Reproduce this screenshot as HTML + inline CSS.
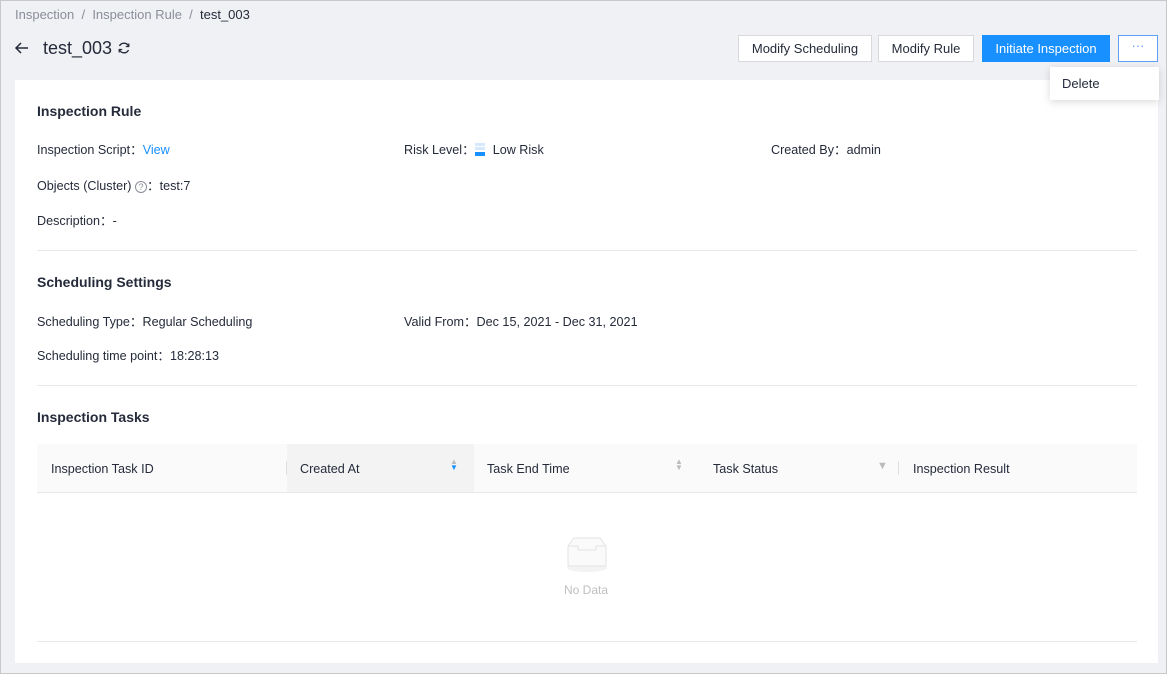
<!DOCTYPE html>
<html><head><meta charset="utf-8"><style>
*{box-sizing:border-box;margin:0;padding:0}
body{width:1167px;height:674px;overflow:hidden;font-family:"Liberation Sans",sans-serif;font-size:13px;color:#252b3a;background:#fff}
.frame{position:absolute;left:0;top:0;width:1167px;height:674px;border:1px solid #c8c8c8;background:#f0f1f5}
.a{position:absolute;white-space:nowrap}
.card{position:absolute;left:14px;top:79px;width:1143px;height:583px;background:#fff}
.btn{position:absolute;top:34px;height:27px;border:1px solid #d9d9d9;background:#fff;font-size:13px;text-align:center;line-height:25px;color:#252b3a}
.h{font-weight:bold;font-size:14px}
.hr{position:absolute;left:22px;width:1100px;height:1px;background:#e8e8e8}
.th{position:absolute;top:365px;height:48px;line-height:48px;font-size:13px;color:#252b3a}
.t{font-size:12.6px}
</style></head><body><div class="frame">
<div class="a" style="left:14px;top:6px;color:#8a8e99">Inspection&nbsp; / &nbsp;Inspection Rule&nbsp; / &nbsp;<span style="color:#252b3a">test_003</span></div>
<svg class="a" style="left:13px;top:39px" width="16" height="16" viewBox="0 0 16 16"><path d="M14 8H2M7 3L2 8l5 5" fill="none" stroke="#252b3a" stroke-width="1.5"/></svg>
<div class="a" style="left:42px;top:37px;font-size:18px">test_003</div>
<svg class="a" style="left:116px;top:40px" width="14" height="14" viewBox="0 0 14 14"><path d="M11.5 5A5 5 0 0 0 2.5 5M2.5 9a5 5 0 0 0 9 0" fill="none" stroke="#252b3a" stroke-width="1.4"/><path d="M11.8 2.5v3h-3M2.2 11.5v-3h3" fill="none" stroke="#252b3a" stroke-width="1.2"/></svg>
<div class="btn" style="left:737px;width:134px">Modify Scheduling</div>
<div class="btn" style="left:877px;width:96px">Modify Rule</div>
<div class="btn" style="left:981px;width:128px;background:#1890ff;border-color:#1890ff;color:#fff">Initiate Inspection</div>
<div class="btn" style="left:1117px;width:40px;border-color:#5e9ef4;color:#5e9ef4;line-height:20px">···</div>
<div class="card">
<div class="a h" style="left:22px;top:23px">Inspection Rule</div>
<div class="a t" style="left:22px;top:59px">Inspection Script：<span style="color:#1890ff">View</span></div>
<div class="a t" style="left:389px;top:59px">Risk Level：<span style="display:inline-block;width:10px;height:13px;vertical-align:-2px;margin-right:8px;background:linear-gradient(#d6e9fc 0 3px,#fff 3px 4px,#d6e9fc 4px 7px,#fff 7px 9px,#1890ff 9px)"></span>Low Risk</div>
<div class="a t" style="left:756px;top:59px">Created By：admin</div>
<div class="a t" style="left:22px;top:95px">Objects (Cluster) <span style="display:inline-block;width:12px;height:12px;border:1px solid #8a8e99;border-radius:50%;font-size:9px;line-height:10px;text-align:center;color:#8a8e99;vertical-align:0">?</span>：test:7</div>
<div class="a t" style="left:22px;top:130px">Description：-</div>
<div class="hr" style="top:170px"></div>
<div class="a h" style="left:22px;top:194px">Scheduling Settings</div>
<div class="a t" style="left:22px;top:231px">Scheduling Type：Regular Scheduling</div>
<div class="a t" style="left:389px;top:231px">Valid From：Dec 15, 2021 - Dec 31, 2021</div>
<div class="a t" style="left:22px;top:265px">Scheduling time point：18:28:13</div>
<div class="hr" style="top:305px"></div>
<div class="a h" style="left:22px;top:329px">Inspection Tasks</div>
<div class="a" style="left:22px;top:364px;width:1100px;height:49px;background:#fafafa;border-bottom:1px solid #e8e8e8"></div>
<div class="a" style="left:272px;top:364px;width:187px;height:48px;background:#f3f3f3"></div>
<div class="a" style="left:271px;top:381px;width:1px;height:14px;background:#e0e0e0"></div>
<div class="a" style="left:883px;top:381px;width:1px;height:14px;background:#e0e0e0"></div>
<div class="th t" style="left:36px">Inspection Task ID</div>
<div class="th t" style="left:285px">Created At</div>
<div class="a" style="left:435px;top:379px;font-size:8px;line-height:6px;color:#bbb">▲<br><span style="color:#1890ff">▼</span></div>
<div class="th t" style="left:472px">Task End Time</div>
<div class="a" style="left:660px;top:379px;font-size:8px;line-height:6px;color:#bbb">▲<br>▼</div>
<div class="th t" style="left:698px">Task Status</div>
<div class="a" style="left:862px;top:380px;font-size:11px;color:#bbb">▼</div>
<div class="th t" style="left:898px">Inspection Result</div>
<svg class="a" style="left:546px;top:455px" width="52" height="40" viewBox="0 0 52 40"><ellipse cx="26" cy="33" rx="20" ry="4" fill="#f3f3f3"/><path d="M7 11L13 3h26l6 8v20H7z" fill="#fafafa" stroke="#e3e3e3"/><path d="M7 11h10v4h18v-4h10" fill="none" stroke="#e3e3e3"/></svg>
<div class="a" style="left:549px;top:503px;color:#c0c0c0;font-size:12px">No Data</div>
<div class="hr" style="top:561px"></div>
</div>
<div class="a" style="left:1049px;top:66px;width:109px;height:33px;background:#fff;box-shadow:0 2px 8px rgba(0,0,0,.15);line-height:33px;padding-left:12px">Delete</div>
</div></body></html>
